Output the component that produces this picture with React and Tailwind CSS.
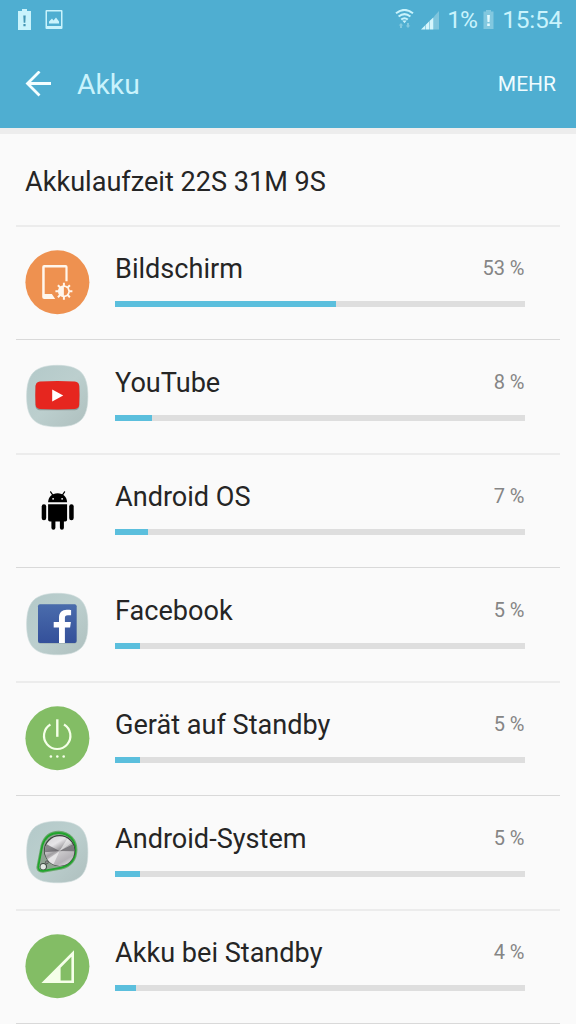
/**
 * Battery usage screen
 *
 * Status bar, title bar and the list of apps with their share of the battery.
 */

// shared by all row icons
const ICON_PROPS = {
  className: 'h-full w-full overflow-visible',
  viewBox: '-0.4 -0.3 64 64',
  fill: 'none',
};

function Squircle({ id }) {
  return (
    <>
      <defs>
        <linearGradient id={id} x1="0" y1="0" x2="1" y2="1">
          <stop offset="0" stopColor="#b3c9c9" />
          <stop offset="0.5" stopColor="#bccfce" />
          <stop offset="1" stopColor="#aebfbe" />
        </linearGradient>
      </defs>
      <path d="M32 1C54.500 1 62.500 9.500 62.500 32S54.500 62.500 32 62.500S1.200 54.500 1.200 32S9.500 1 32 1Z" fill={`url(#${id})`} stroke="#cfdcdb" strokeWidth="0.600" />
    </>
  );
}

function ScreenIcon() {
  return (
    <svg {...ICON_PROPS}>
      <circle cx="32" cy="32" r="32" fill="#ee9150" />
      <path fillRule="evenodd" d="M18.800 14.800H40.200Q42.200 14.800 42.200 16.800V31H40V17.300H19.300V43.600H26.500L29.800 48.600H18.800Q16.800 48.600 16.800 46.600V16.800Q16.800 14.800 18.800 14.800Z" fill="#fff6ec" />
      <path d="M38.500 32.500V49.500M30 41H47M32.500 35L44.500 47M44.500 35L32.500 47" stroke="#fff6ec" strokeWidth="2" />
      <circle cx="38.500" cy="41" r="6" fill="#fff6ec" />
      <path d="M38.500 36.700A4.300 4.300 0 0 1 38.500 45.300Z" fill="#ee9150" />
    </svg>
  );
}

function YouTubeIcon() {
  return (
    <svg {...ICON_PROPS}>
      <Squircle id="yt-tile" />
      <rect x="10" y="18" width="44" height="28" rx="4.500" fill="#8d9b9a" />
      <path d="M14.500 17.100Q32 16.400 49.500 17.100Q53.300 17.400 53.800 21.500Q54.400 31 53.800 40.500Q53.300 44.500 49.500 44.700Q32 45.500 14.500 44.700Q10.700 44.500 10.200 40.500Q9.600 31 10.200 21.500Q10.700 17.400 14.500 17.100Z" fill="#e6261f" />
      <path d="M26.800 25.200L37.800 31.200L26.800 37.200Z" fill="#fff" />
    </svg>
  );
}

function AndroidIcon() {
  return (
    <svg {...ICON_PROPS}>
      <path d="M25.200 13.500L27.600 17M39.200 13.500L36.800 17" stroke="#000" strokeWidth="1.200" strokeLinecap="round" />
      <path d="M22.700 24C23 18.500 26.500 15 32.200 15S41.400 18.500 41.700 24Z" fill="#000" />
      <circle cx="27.700" cy="20.500" r="0.900" fill="#fff" />
      <circle cx="36.700" cy="20.500" r="0.900" fill="#fff" />
      <path d="M22.700 26H41.700V41.500Q41.700 43.300 39.900 43.300H38.500V49.500A2 2 0 0 1 34.500 49.500V43.300H30V49.500A2 2 0 0 1 26 49.500V43.300H24.500Q22.700 43.300 22.700 41.500Z" fill="#000" />
      <rect x="16.300" y="26" width="4.500" height="16" rx="2.200" fill="#000" />
      <rect x="43.800" y="26" width="4.500" height="16" rx="2.200" fill="#000" />
    </svg>
  );
}

function FacebookIcon() {
  return (
    <svg {...ICON_PROPS}>
      <defs>
        <linearGradient id="fb-blue" x1="0" y1="0" x2="0" y2="1">
          <stop offset="0" stopColor="#4a6cac" />
          <stop offset="1" stopColor="#34509a" />
        </linearGradient>
      </defs>
      <Squircle id="fb-tile" />
      <rect x="12.600" y="12.500" width="38.600" height="38.600" rx="2" fill="#91a4a8" />
      <rect x="12.600" y="12" width="38.600" height="38.600" rx="2" fill="url(#fb-blue)" />
      <path d="M33.600 50.600V35.300H28.300V29.700H33.600V25.500C33.600 20.200 36.700 17.400 41.400 17.400C43.500 17.400 45 17.500 45.700 17.700V23H42.500C40 23 39.500 24.200 39.500 26V29.700H45.500L44.700 35.300H39.500V50.600Z" fill="#fff" />
    </svg>
  );
}

function PowerIcon() {
  return (
    <svg {...ICON_PROPS}>
      <circle cx="32" cy="32" r="32" fill="#83bd65" />
      <path d="M25 18.200A13.200 13.200 0 1 0 38.600 18.200" stroke="#f5ffe9" strokeWidth="2.200" />
      <path d="M31.900 13V30.500" stroke="#f5ffe9" strokeWidth="2.400" />
      <g fill="#f5ffe9">
        <circle cx="25.500" cy="50.200" r="1.300" />
        <circle cx="31.900" cy="50.200" r="1.300" />
        <circle cx="38.300" cy="50.200" r="1.300" />
      </g>
    </svg>
  );
}

function SystemIcon() {
  return (
    <svg {...ICON_PROPS}>
      <defs>
        <linearGradient id="knob" x1="0.200" y1="0" x2="0.800" y2="1">
          <stop offset="0" stopColor="#d8d6d9" />
          <stop offset="0.250" stopColor="#e6e4e7" />
          <stop offset="0.450" stopColor="#a19fa2" />
          <stop offset="0.550" stopColor="#c9c7ca" />
          <stop offset="0.800" stopColor="#b5b2b7" />
          <stop offset="1" stopColor="#e4e2e5" />
        </linearGradient>
      </defs>
      <Squircle id="sys-tile" />
      <path d="M12.500 45.500L16.500 25C19.500 15.500 26 11.700 33.500 11.800C44.500 12.300 50.800 20 50.800 29.500C50.800 39.500 45 46 36 48L19 51C14 52 11.500 49.500 12.500 45.500Z" fill="#5c8060" stroke="#6aa86c" strokeWidth="2.500" />
      <path d="M13 45.500L17 25C20 16 26.500 12.500 33.700 12.700C44.200 13.200 50 20.500 50 29.500C50 39 44.500 45.200 36 47.300L19 50.300C14.500 51.100 12.200 49.300 13 45.500Z" fill="#8fa392" stroke="#1fa52c" strokeWidth="1.800" />
      <circle cx="34.200" cy="30.300" r="15.600" fill="#39423b" />
      <circle cx="34.200" cy="30.800" r="14.800" fill="url(#knob)" />
      <path d="M34.200 30.800L21.200 24A14.800 14.800 0 0 0 19.400 32ZM34.200 30.800L48.900 31A14.800 14.800 0 0 0 47.300 24Z" fill="#4d4b50" opacity="0.600" />
      <path d="M34.200 30.800L42 18.200A14.800 14.800 0 0 1 46.500 22.500ZM34.200 30.800L22 39.100A14.800 14.800 0 0 0 28 44.200Z" fill="#fff" opacity="0.550" />
      <circle cx="18" cy="46.200" r="3.600" fill="#3e4b40" />
      <circle cx="17.800" cy="46.500" r="2.700" fill="#e3e9e4" />
      <circle cx="21.500" cy="42" r="1.500" fill="#8b8e8c" stroke="#444" strokeWidth="0.600" />
    </svg>
  );
}

function SignalIcon() {
  return (
    <svg {...ICON_PROPS}>
      <circle cx="32" cy="32" r="32" fill="#83bd65" />
      <path fillRule="evenodd" d="M16 48.800L48.600 16V48.800ZM35.200 46.300H46V22.500L35.200 33.500Z" fill="#f5ffe9" />
    </svg>
  );
}

// bar = filled part of the 410px track
const apps = [
  { name: 'Bildschirm', percent: 53, bar: 221, Icon: ScreenIcon },
  { name: 'YouTube', percent: 8, bar: 37, Icon: YouTubeIcon },
  { name: 'Android OS', percent: 7, bar: 33, Icon: AndroidIcon },
  { name: 'Facebook', percent: 5, bar: 25, Icon: FacebookIcon },
  { name: 'Gerät auf Standby', percent: 5, bar: 25, Icon: PowerIcon },
  { name: 'Android-System', percent: 5, bar: 25, Icon: SystemIcon },
  { name: 'Akku bei Standby', percent: 4, bar: 21, Icon: SignalIcon },
];

function StatusBar() {
  return (
    <div className="flex h-10 items-center justify-between pl-[17px] pr-[14px] text-[#c9f3fc]">
      <div className="flex items-center gap-[13px]">
        <svg className="h-[22px] w-[15px]" viewBox="0 0.500 15 22">
          <path d="M5 0.500H10V2.500H14V21.500H1V2.500H5Z" fill="#c9f3fc" />
          <path d="M6.300 7H8.700L8.300 14.200H6.700ZM6.400 15.500H8.600V17.700H6.400Z" fill="#4496b4" />
        </svg>
        <svg className="h-[20px] w-[18px]" viewBox="0 0.500 18 20">
          <path fillRule="evenodd" d="M1.500 0.500H16.500Q17.500 0.500 17.500 1.500V18.500Q17.500 19.500 16.500 19.500H1.500Q0.500 19.500 0.500 18.500V1.500Q0.500 0.500 1.500 0.500ZM2 2V16.500H16V2Z" fill="#c9f3fc" />
          <path d="M4 14V12L7 9L8.500 11L11 8L14 12V14Z" fill="#c9f3fc" />
        </svg>
      </div>
      <div className="flex items-center">
        <svg className="h-[22px] w-[19px]" viewBox="0 0.500 19 22" fill="none">
          <path d="M1 4.800Q9.500 -2 18 4.800M3.600 8Q9.500 3.200 15.400 8M6.200 11Q9.500 8.400 12.800 11" stroke="#c9f3fc" strokeWidth="2" />
          <path d="M7.300 12H11.700L9.500 14.800Z" fill="#c9f3fc" />
          <path d="M6 14.500L8.300 17H7V19.500H5V17H3.700ZM13 19.500L10.700 17H12V14.500H14V17H15.300Z" fill="#83c9df" />
        </svg>
        <svg className="ml-[6px] h-[20px] w-[20px]" viewBox="0 0 20 20">
          <path d="M1 19.500L5 15.500V19.500ZM5.500 15L9 11.500V19.500H5.500ZM9.500 11L13.500 7.200V19.500H9.500Z" fill="#d5f5fc" />
          <path d="M14 6.500L19 1V19.500H14Z" fill="#7fc5dd" />
        </svg>
        <span className="ml-[7px] w-[30px] pt-px text-[24.500px] leading-none tracking-[-0.900px]">1%</span>
        <svg className="ml-[6px] h-[20px] w-[11px]" viewBox="0 0.500 11 20">
          <path d="M3 0.500H8V2H10.500V19.500H0.500V2H3Z" fill="#82c8df" />
          <path d="M4.100 5.500H6.900L6.500 12.500H4.500ZM4.200 14H6.800V16.400H4.200Z" fill="#e4fbff" />
        </svg>
        <span className="ml-[8px] pt-px text-[24.500px] leading-none tracking-[-0.250px]">15:54</span>
      </div>
    </div>
  );
}

function AppRow({ app, even }) {
  const { name, percent, bar, Icon } = app;

  return (
    <li className={`mx-4 flex h-[114px] ${even ? 'border-t-2 border-[#ececec] pt-[23px]' : 'border-t border-[#d9d9d9] pt-6'}`}>
      <div className="ml-[9px] h-16 w-16 shrink-0">
        <Icon />
      </div>
      <div className="ml-[26px] w-[410px]">
        <div className="flex h-[51px] items-start justify-between">
          <span className="pt-0.5 text-[27.100px] leading-[34px] text-[#252525]">{name}</span>
          <span className="pr-[0.500px] pt-1 text-[20px] leading-[28px] text-[#858585]">{percent} %</span>
        </div>
        <div className="h-[6px] bg-[#dedede]">
          <div className="h-full bg-[#5bbfdd]" style={{ width: bar }} />
        </div>
      </div>
    </li>
  );
}

export default function App() {
  return (
    <div className="h-[1024px] w-[576px] overflow-hidden bg-[#fafafa] font-['Roboto',sans-serif]">
      <header className="h-32 bg-[#4faed1]">
        <StatusBar />
        <div className="flex h-[88px] items-center pl-[25px] pr-5">
          <svg className="h-[27px] w-[27px]" viewBox="0 1 27 27" fill="none">
            <path d="M14.500 1.500L2.500 13.500L14.500 25.500M2.500 13.500H26" stroke="#f4feff" strokeWidth="2.800" />
          </svg>
          <h1 className="ml-[25px] flex-1 pt-0.5 text-[28.300px] leading-none text-[#c9f3fc]">Akku</h1>
          <button className="text-[21px] leading-none text-[#f0fcff]">MEHR</button>
        </div>
      </header>
      <div className="h-[6px] bg-[#ededed]" />

      <h2 className="flex h-[91px] items-center pl-[25px] pt-[6px] text-[27.100px] leading-none text-[#252525]">
        Akkulaufzeit 22S 31M 9S
      </h2>

      <ul>
        {apps.map((app, i) => (
          <AppRow key={app.name} app={app} even={i % 2 === 0} />
        ))}
        <li className="mx-4 border-t border-[#d9d9d9]" />
      </ul>
    </div>
  );
}
